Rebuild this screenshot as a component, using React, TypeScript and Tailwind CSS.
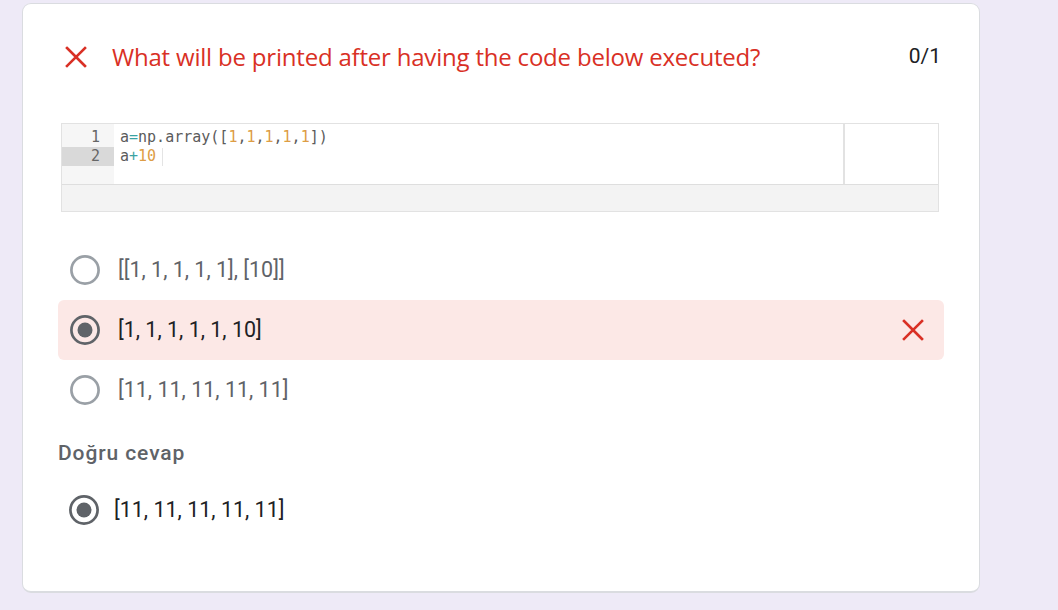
const Radio = ({ checked, dark }: { checked?: boolean; dark?: boolean }) => (
  <svg width="30" height="30" viewBox="0 0 30 30" className="shrink-0">
    <circle cx="15" cy="15" r="13.6" fill="none" stroke={dark ? "#5f6368" : "#9aa0a6"} strokeWidth="2.7" />
    {checked && <circle cx="15" cy="15" r="7.5" fill="#5f6368" />}
  </svg>
);

const Cross = ({ size }: { size: number }) => (
  <svg width={size} height={size} viewBox="0 0 22 22" className="shrink-0">
    <path d="M2 2 L20 20 M20 2 L2 20" stroke="#d93025" strokeWidth="2.6" strokeLinecap="square" />
  </svg>
);

const CodeImage = () => (
  <div className="mt-[49px] ml-[3px] w-[878px] h-[89px] border border-[#e2e2e2] bg-[#f3f3f3] flex flex-col">
    <div className="flex h-[61px] border-b border-[#dedede] bg-white font-['DejaVu_Sans_Mono',monospace] text-[15px] leading-[19px]">
      <div className="w-[52px] bg-[#f6f6f6] pt-[4px] text-right text-[#666]">
        <div className="pr-[14px]">1</div>
        <div className="pr-[14px] bg-[#d9d9d9]">2</div>
      </div>
      <div className="flex-1 pt-[4px] pl-[6px] text-[#5b5b5b]">
        <div>
          a<span className="text-[#3aa3a3]">=</span>np.array([
          <span className="text-[#dd9d45]">1</span>,<span className="text-[#dd9d45]">1</span>,
          <span className="text-[#dd9d45]">1</span>,<span className="text-[#dd9d45]">1</span>,
          <span className="text-[#dd9d45]">1</span>])
        </div>
        <div className="flex items-center">
          a<span className="text-[#3aa3a3]">+</span><span className="text-[#dd9d45]">10</span>
          <span className="ml-[6px] inline-block w-px h-[18px] bg-[#e4e4e4]" />
        </div>
      </div>
      <div className="w-[95px] border-l-2 border-[#e2e2e2]" />
    </div>
  </div>
);

const options = [
  { text: "[[1, 1, 1, 1, 1], [10]]" },
  { text: "[1, 1, 1, 1, 1, 10]", selected: true },
  { text: "[11, 11, 11, 11, 11]" },
];

export default function App() {
  return (
    <div className="w-[1058px] h-[610px] bg-[#eeeaf7] pt-[3px] pl-[22px] font-['Roboto',sans-serif]">
      <div className="w-[958px] h-[590px] rounded-[9px] border border-[#dadce0] border-b-2 bg-white px-[35px]">
        <div className="mt-[36px] flex items-center h-[34px]">
          <div className="ml-[7px]">
            <Cross size={22} />
          </div>
          <div className="ml-[25px] text-[24px] text-[#d93025] font-['Open_Sans',sans-serif] tracking-[-0.2px]">
            What will be printed after having the code below executed?
          </div>
          <div className="ml-auto mr-[3px] text-[21px] text-[#202124]">0/1</div>
        </div>
        <CodeImage />
        <div className="mt-[28px] flex flex-col">
          {options.map((o) => (
            <div
              key={o.text}
              className={`flex items-center h-[60px] pl-[12px] rounded-[6px] ${o.selected ? "bg-[#fce8e6]" : ""}`}
            >
              <Radio checked={o.selected} dark={o.selected} />
              <span className={`ml-[18px] text-[21.5px] ${o.selected ? "text-[#202124]" : "text-[#5f6368]"}`}>
                {o.text}
              </span>
              {o.selected && (
                <div className="ml-auto mr-[20px]">
                  <Cross size={22} />
                </div>
              )}
            </div>
          ))}
        </div>
        <div className="mt-[18px] text-[21px] font-medium tracking-[0.9px] text-[#5f6368]">Doğru cevap</div>
        <div className="mt-[24px] flex items-center pl-[11px]">
          <Radio checked dark />
          <span className="ml-[15px] text-[21.5px] text-[#202124]">[11, 11, 11, 11, 11]</span>
        </div>
      </div>
    </div>
  );
}
